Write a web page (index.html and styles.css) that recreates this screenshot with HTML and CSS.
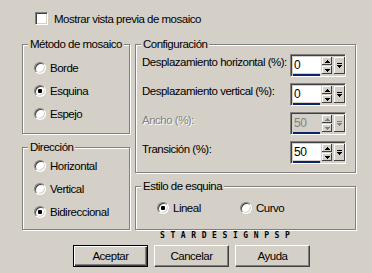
FILE: index.html
```html
<!DOCTYPE html>
<html lang="es">
<head>
  <meta charset="UTF-8" />
  <title>Mosaico</title>
  <link rel="stylesheet" href="styles.css">
</head>
<body>
  <div class="dialog">
    <label class="preview-row">
      <input type="checkbox" class="check" />
      <span>Mostrar vista previa de mosaico</span>
    </label>

    <div class="groups">
      <div class="col">
        <fieldset class="group method">
          <legend>Método de mosaico</legend>
          <div class="options">
            <label class="option"><input type="radio" name="metodo" class="radio" /> Borde</label>
            <label class="option"><input type="radio" name="metodo" class="radio" checked /> Esquina</label>
            <label class="option"><input type="radio" name="metodo" class="radio" /> Espejo</label>
          </div>
        </fieldset>

        <fieldset class="group direction">
          <legend>Dirección</legend>
          <div class="options">
            <label class="option"><input type="radio" name="dir" class="radio" /> Horizontal</label>
            <label class="option"><input type="radio" name="dir" class="radio" /> Vertical</label>
            <label class="option"><input type="radio" name="dir" class="radio" checked /> Bidireccional</label>
          </div>
        </fieldset>
      </div>

      <div class="col">
        <fieldset class="group config">
          <legend>Configuración</legend>
          <div class="rows">
            <div class="row">
              <span class="row-label">Desplazamiento horizontal (%):</span>
              <div class="spin">
                <div class="spin-value"><div class="spin-input">0</div><div class="spin-bar"></div></div>
                <div class="spin-arrows">
                  <span class="arrow-btn"><svg width="5" height="3"><rect x="2" y="0" width="1" height="1"/><rect x="1" y="1" width="3" height="1"/><rect x="0" y="2" width="5" height="1"/></svg></span>
                  <span class="arrow-btn"><svg width="5" height="3"><rect x="0" y="0" width="5" height="1"/><rect x="1" y="1" width="3" height="1"/><rect x="2" y="2" width="1" height="1"/></svg></span>
                </div>
                <span class="drop-btn"><svg width="5" height="6"><rect x="0" y="0" width="5" height="1"/><rect x="0" y="2" width="5" height="1"/><rect x="1" y="3" width="3" height="1"/><rect x="2" y="4" width="1" height="1"/></svg></span>
              </div>
            </div>
            <div class="row">
              <span class="row-label">Desplazamiento vertical (%):</span>
              <div class="spin">
                <div class="spin-value"><div class="spin-input">0</div><div class="spin-bar"></div></div>
                <div class="spin-arrows">
                  <span class="arrow-btn"><svg width="5" height="3"><rect x="2" y="0" width="1" height="1"/><rect x="1" y="1" width="3" height="1"/><rect x="0" y="2" width="5" height="1"/></svg></span>
                  <span class="arrow-btn"><svg width="5" height="3"><rect x="0" y="0" width="5" height="1"/><rect x="1" y="1" width="3" height="1"/><rect x="2" y="2" width="1" height="1"/></svg></span>
                </div>
                <span class="drop-btn"><svg width="5" height="6"><rect x="0" y="0" width="5" height="1"/><rect x="0" y="2" width="5" height="1"/><rect x="1" y="3" width="3" height="1"/><rect x="2" y="4" width="1" height="1"/></svg></span>
              </div>
            </div>
            <div class="row disabled">
              <span class="row-label">Ancho (%):</span>
              <div class="spin">
                <div class="spin-value"><div class="spin-input">50</div><div class="spin-bar"></div></div>
                <div class="spin-arrows">
                  <span class="arrow-btn"><svg width="5" height="3"><rect x="2" y="0" width="1" height="1"/><rect x="1" y="1" width="3" height="1"/><rect x="0" y="2" width="5" height="1"/></svg></span>
                  <span class="arrow-btn"><svg width="5" height="3"><rect x="0" y="0" width="5" height="1"/><rect x="1" y="1" width="3" height="1"/><rect x="2" y="2" width="1" height="1"/></svg></span>
                </div>
                <span class="drop-btn"><svg width="5" height="6"><rect x="0" y="0" width="5" height="1"/><rect x="0" y="2" width="5" height="1"/><rect x="1" y="3" width="3" height="1"/><rect x="2" y="4" width="1" height="1"/></svg></span>
              </div>
            </div>
            <div class="row">
              <span class="row-label">Transición (%):</span>
              <div class="spin">
                <div class="spin-value"><div class="spin-input">50</div><div class="spin-bar"></div></div>
                <div class="spin-arrows">
                  <span class="arrow-btn"><svg width="5" height="3"><rect x="2" y="0" width="1" height="1"/><rect x="1" y="1" width="3" height="1"/><rect x="0" y="2" width="5" height="1"/></svg></span>
                  <span class="arrow-btn"><svg width="5" height="3"><rect x="0" y="0" width="5" height="1"/><rect x="1" y="1" width="3" height="1"/><rect x="2" y="2" width="1" height="1"/></svg></span>
                </div>
                <span class="drop-btn"><svg width="5" height="6"><rect x="0" y="0" width="5" height="1"/><rect x="0" y="2" width="5" height="1"/><rect x="1" y="3" width="3" height="1"/><rect x="2" y="4" width="1" height="1"/></svg></span>
              </div>
            </div>
          </div>
        </fieldset>

        <fieldset class="group corner">
          <legend>Estilo de esquina</legend>
          <div class="inline-options">
            <label class="option first"><input type="radio" name="estilo" class="radio" checked /> Lineal</label>
            <label class="option"><input type="radio" name="estilo" class="radio" /> Curvo</label>
          </div>
        </fieldset>
      </div>
    </div>

    <div class="logo">STARDESIGNPSP</div>

    <div class="buttons">
      <button class="btn default">Aceptar</button>
      <button class="btn">Cancelar</button>
      <button class="btn">Ayuda</button>
    </div>
  </div>
</body>
</html>
```

FILE: styles.css
```css
body {
  margin: 0;
  background: #d4d0c8;
  font-family: 'Liberation Sans', Arial, sans-serif;
  font-size: 11.5px;
  letter-spacing: -0.5px;
  color: #000;
  white-space: nowrap;
}

.dialog {
  width: 372px;
  height: 273px;
  padding-top: 12px;
  box-sizing: border-box;
}

.preview-row {
  display: flex;
  align-items: center;
  gap: 6px;
  height: 13px;
  margin-left: 35px;
}

.check {
  appearance: none;
  margin: 0;
  width: 13px;
  height: 13px;
  background: #fff;
  border: 1px solid;
  border-color: #808080 #fff #fff #808080;
  box-shadow: inset 1px 1px #404040, inset -1px -1px #d4d0c8;
}

.groups {
  display: grid;
  grid-template-columns: 108px 221px;
  column-gap: 5px;
  margin: 12px 0 0 22px;
}

.col {
  display: flex;
  flex-direction: column;
  gap: 6px;
}

.group {
  margin: 0;
  padding: 0;
  min-width: 0;
  box-sizing: border-box;
  border: 1px solid #808080;
  box-shadow: inset 1px 1px #fff, 1px 1px 0 #fff;
}

.group legend {
  margin-left: 5px;
  padding: 0 2px;
  line-height: 14px;
  background: #d4d0c8;
}

.method { height: 97px; }
.direction { height: 90px; }
.config { height: 136px; }
.corner { height: 51px; }

.options {
  display: flex;
  flex-direction: column;
  gap: 9px;
  padding: 10px 0 0 11px;
}

.direction .options {
  padding-top: 5px;
}

.option {
  display: flex;
  align-items: center;
  height: 14px;
}

.radio {
  appearance: none;
  margin: 0 4px 0 0;
  width: 12px;
  height: 12px;
  border-radius: 50%;
  background: #fff;
  border: 1px solid;
  border-color: #808080 #fff #fff #808080;
  box-shadow: inset 1px 1px #404040, inset -1px -1px #d4d0c8;
}

.radio:checked {
  background: radial-gradient(circle, #000 0 2px, #fff 2.5px);
}

.rows {
  display: flex;
  flex-direction: column;
  gap: 6px;
  padding: 3px 9px 0 6px;
}

.row {
  display: flex;
  justify-content: space-between;
  align-items: flex-start;
}

.row-label {
  line-height: 16px;
}

.spin {
  display: flex;
  width: 56px;
  height: 23px;
  box-sizing: border-box;
  padding: 2px 0 0 2px;
  border: 1px solid;
  border-color: #808080 #fff #fff #808080;
  box-shadow: inset 1px 1px #404040, inset -1px -1px #d4d0c8;
}

.spin-value {
  width: 29px;
  display: flex;
  flex-direction: column;
}

.spin-input {
  height: 16px;
  line-height: 16px;
  padding-left: 1px;
  background: #fff;
  font-size: 12px;
}

.spin-bar {
  width: 27px;
  height: 3px;
  margin-top: 1px;
  background: #0a246a;
}

.spin-arrows {
  display: flex;
  flex-direction: column;
  gap: 1px;
  margin-left: 1px;
  width: 10px;
}

.arrow-btn,
.drop-btn {
  display: flex;
  align-items: center;
  justify-content: center;
  background: #d4d0c8;
  box-shadow: inset -1px -1px #404040, inset 1px 1px #fff;
}

.arrow-btn {
  height: 8px;
}

.drop-btn {
  width: 11px;
  height: 17px;
  margin-left: 2px;
}

.disabled .row-label {
  color: #808080;
  text-shadow: 1px 1px #fff;
}

.disabled .spin-input {
  background: #d4d0c8;
  color: #808080;
}

.disabled svg {
  fill: #808080;
}

.inline-options {
  display: flex;
  padding: 8px 0 0 21px;
}

.inline-options .first {
  width: 83px;
}

.logo {
  margin: 3px 0 0 160px;
  height: 6px;
  font-family: 'DejaVu Sans Mono', monospace;
  font-weight: bold;
  font-size: 8px;
  line-height: 6px;
  letter-spacing: 5.6px;
}

.buttons {
  display: flex;
  gap: 6px;
  margin: 6px 0 0 73px;
}

.btn {
  width: 75px;
  height: 22px;
  padding: 0;
  font: inherit;
  letter-spacing: inherit;
  color: #000;
  background: #d4d0c8;
  border: 1px solid;
  border-color: #fff #404040 #404040 #fff;
  box-shadow: inset -1px -1px #808080;
}

.btn.default {
  border-color: #000;
  box-shadow: inset 1px 1px #fff, inset -1px -1px #404040, inset -2px -2px #808080;
}
```
